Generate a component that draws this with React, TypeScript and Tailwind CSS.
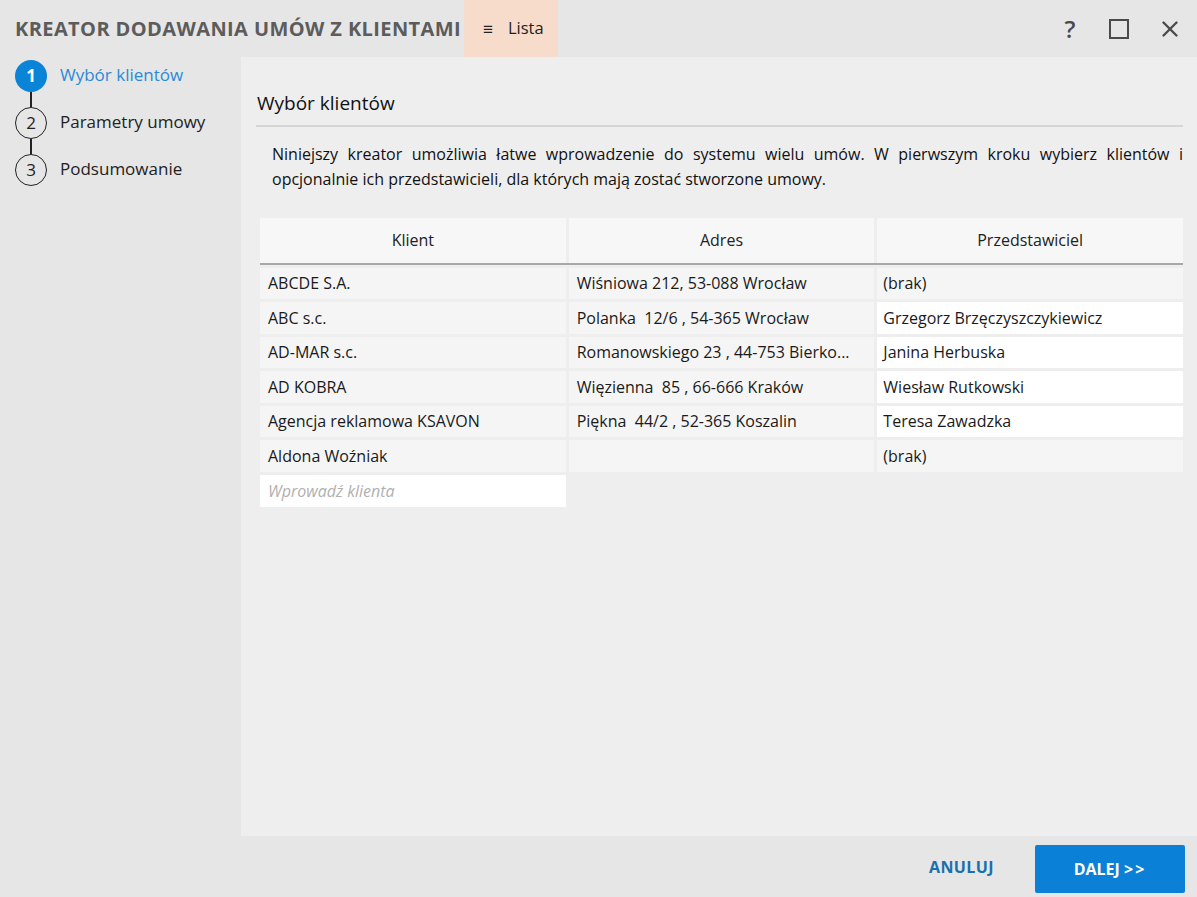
import { X } from 'lucide-react';

const font = { fontFamily: '"Open Sans", "Noto Sans", sans-serif' };

const steps = [
  { n: 1, label: 'Wybór klientów', active: true },
  { n: 2, label: 'Parametry umowy', active: false },
  { n: 3, label: 'Podsumowanie', active: false },
];

const rows = [
  { klient: 'ABCDE S.A.', adres: 'Wiśniowa 212, 53-088 Wrocław', przed: '(brak)', brak: true },
  { klient: 'ABC s.c.', adres: 'Polanka  12/6 , 54-365 Wrocław', przed: 'Grzegorz Brzęczyszczykiewicz', brak: false },
  { klient: 'AD-MAR s.c.', adres: 'Romanowskiego 23 , 44-753 Bierko...', przed: 'Janina Herbuska', brak: false },
  { klient: 'AD KOBRA', adres: 'Więzienna  85 , 66-666 Kraków', przed: 'Wiesław Rutkowski', brak: false },
  { klient: 'Agencja reklamowa KSAVON', adres: 'Piękna  44/2 , 52-365 Koszalin', przed: 'Teresa Zawadzka', brak: false },
  { klient: 'Aldona Woźniak', adres: '', przed: '(brak)', brak: true },
];

export default function App() {
  return (
    <div className="w-[1197px] h-[897px] bg-[#e6e6e6] flex flex-col text-[#1a1a1a] overflow-hidden" style={font}>
      {/* title bar */}
      <div className="h-[57px] flex items-stretch shrink-0">
        <div className="pl-[15px] pr-[3px] flex items-center text-[20px] font-bold text-[#5c5c5c] tracking-[0.4px] whitespace-nowrap">
          KREATOR DODAWANIA UMÓW Z KLIENTAMI
        </div>
        <div className="w-[94px] bg-[#f8dccb] flex items-center pl-[19px] gap-[15px] text-[16.5px] text-[#222]">
          <span className="text-[17px] leading-none">≡</span>
          <span>Lista</span>
        </div>
        <div className="flex-1" />
        <div className="flex items-center gap-[26px] pr-[14px] text-[#4a4a4a]">
          <span className="text-[24px] font-semibold leading-none w-[22px] text-center">?</span>
          <span className="w-[20px] h-[20px] border-[2.5px] border-[#4a4a4a] mx-[2px]" />
          <X className="w-[26px] h-[26px]" strokeWidth={2.2} />
        </div>
      </div>

      <div className="flex flex-1 min-h-0">
        {/* sidebar steps */}
        <div className="w-[241px] shrink-0 pl-[15px] pt-[3px]">
          {steps.map((s, i) => (
            <div key={s.n}>
              {i > 0 && <div className="ml-[15px] w-[1.5px] h-[15px] bg-[#222]" />}
              <div className="flex items-center gap-[13px]">
                <div
                  className={`w-[32px] h-[32px] rounded-full flex items-center justify-center text-[17px] ${
                    s.active ? 'bg-[#0a84d6] text-white font-bold' : 'border-[1.5px] border-[#222] text-[#222]'
                  }`}>
                  {s.n}
                </div>
                <span className={`text-[17px] leading-[22px] mt-[-2px] ${s.active ? 'text-[#2b8ad6]' : 'text-[#222]'}`}>
                  {s.label}
                </span>
              </div>
            </div>
          ))}
        </div>

        {/* content panel */}
        <div className="flex-1 bg-[#eeeeee] pl-[15px] pr-[14px] pt-[32px]">
          <h2 className="text-[19px] pl-[1px] pb-[7px] border-b-2 border-[#d6d6d6] text-[#111]">Wybór klientów</h2>
          <p className="mt-[15px] pl-[16px] text-[16px] leading-[25px] text-justify text-[#111]">
            Niniejszy kreator umożliwia łatwe wprowadzenie do systemu wielu umów. W pierwszym kroku wybierz klientów i
            opcjonalnie ich przedstawicieli, dla których mają zostać stworzone umowy.
          </p>

          <div className="mt-[26px] ml-[4px] text-[16px]">
            <div className="grid grid-cols-3 gap-x-[3px] border-b-2 border-[#a8a8a8]">
              {['Klient', 'Adres', 'Przedstawiciel'].map(h => (
                <div key={h} className="h-[45px] bg-[#f7f7f7] flex items-center justify-center text-[#222]">
                  {h}
                </div>
              ))}
            </div>
            <div className="mt-[3px] flex flex-col gap-[3px]">
              {rows.map(r => (
                <div key={r.klient} className="grid grid-cols-3 gap-x-[3px]">
                  <div className="h-[31.5px] bg-[#f5f5f5] px-[8px] flex items-center whitespace-pre">{r.klient}</div>
                  <div className="h-[31.5px] bg-[#f5f5f5] px-[8px] flex items-center whitespace-pre">{r.adres}</div>
                  <div className={`h-[31.5px] px-[6px] flex items-center ${r.brak ? 'bg-[#f5f5f5]' : 'bg-white'}`}>
                    {r.przed}
                  </div>
                </div>
              ))}
              <div className="grid grid-cols-3 gap-x-[3px]">
                <div className="h-[32px] bg-white px-[8px] flex items-center italic text-[#b0b0b0]">Wprowadź klienta</div>
              </div>
            </div>
          </div>
        </div>
      </div>

      {/* footer */}
      <div className="h-[61px] shrink-0 flex items-center justify-end pr-[12px] gap-[41px]">
        <button className="text-[16px] font-bold text-[#1a6fae] tracking-[0.4px]">ANULUJ</button>
        <button className="w-[150px] h-[48px] mt-[4px] rounded-[2px] bg-[#0a80d6] text-white text-[16px] font-bold">
          DALEJ <span className="tracking-[2px]">&gt;&gt;</span>
        </button>
      </div>
    </div>
  );
}
